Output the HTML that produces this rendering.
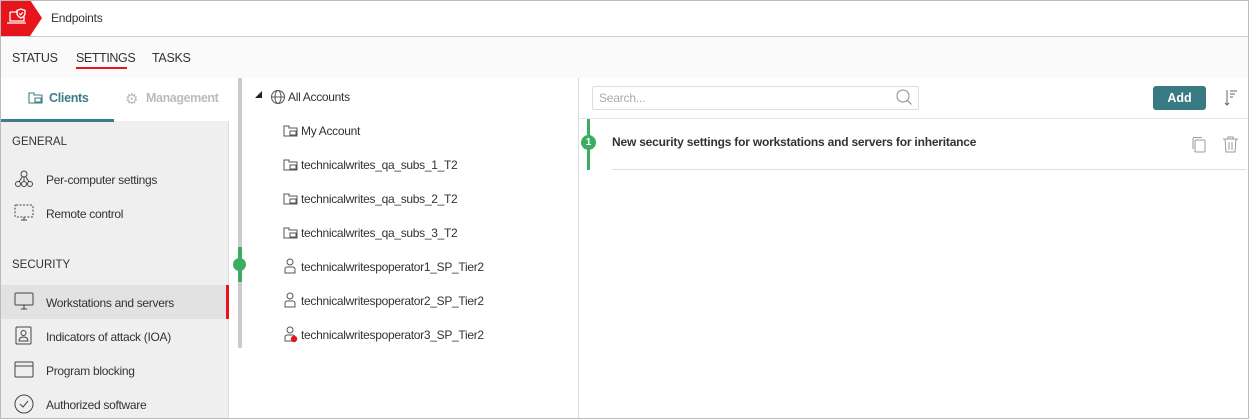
<!DOCTYPE html>
<html><head><style>
*{box-sizing:border-box;margin:0;padding:0}
body{width:1249px;height:419px;overflow:hidden;font-family:"Liberation Sans",sans-serif;color:#333;background:#fff;position:relative}
.frame{position:absolute;inset:0;border:1px solid #bbb;pointer-events:none;z-index:9}
.hdr{position:absolute;left:0;top:0;width:1249px;height:37px;border-bottom:1px solid #ccc;background:#fff}
.logo{position:absolute;left:0;top:0;width:42px;height:36px;background:#e8141b;clip-path:polygon(0 0,30px 0,42px 18px,30px 36px,0 36px)}
.abs{position:absolute;white-space:nowrap}
.tabs{position:absolute;left:0;top:37px;width:1249px;height:41px;background:#fafafa}
.left{position:absolute;left:0;top:78px;width:229px;height:341px;background:#efefef;border-right:1px solid #ddd}
.tree{position:absolute;left:230px;top:78px;width:349px;height:341px;background:#fff;border-right:1px solid #ddd}
.t{font-size:12px;letter-spacing:-0.3px;color:#333}
.sec{font-size:11.5px;color:#333}
</style></head><body>
<div class="hdr">
 <div class="logo"><svg width="30" height="36" viewBox="0 0 30 36"><g fill="none" stroke="#fff" stroke-width="1.3"><path d="M10 12h8M10 12v9h14v-5"/><path d="M7 23h19"/><path d="M21 9l4 1.5v3c0 2-2 3.5-4 4.5-2-1-4-2.5-4-4.5v-3z"/><path d="M19.3 13.5l1.3 1.2 2.3-2.3"/></g></svg></div>
 <div class="abs" style="left:51px;top:11px;font-size:12px;letter-spacing:-0.2px">Endpoints</div>
</div>
<div class="tabs">
 <div class="abs" style="left:12px;top:14px;font-size:12.5px;letter-spacing:-0.3px">STATUS</div>
 <div class="abs" style="left:76px;top:14px;font-size:12.5px;letter-spacing:-0.4px">SETTINGS</div>
 <div class="abs" style="left:76px;top:30px;width:51px;height:2px;background:#e8141b"></div>
 <div class="abs" style="left:152px;top:14px;font-size:12.5px;letter-spacing:-0.3px">TASKS</div>
</div>
<div class="left">
 <div class="abs" style="left:0;top:0;width:229px;height:43px;background:#fff"></div>
 <svg class="abs" style="left:28px;top:14px" width="15" height="12"><g fill="none" stroke="#3b7d88" stroke-width="1.1"><path d="M1 1h5v2h8v8H1z"/><path d="M7 6h6v4H7z"/></g></svg>
 <div class="abs" style="left:49px;top:13px;font-size:12.5px;font-weight:bold;letter-spacing:-0.3px;color:#3b7d88">Clients</div>
 <div class="abs" style="left:125px;top:12px;font-size:15px;color:#bbb">⚙</div>
 <div class="abs" style="left:146px;top:13px;font-size:12.5px;font-weight:bold;letter-spacing:-0.4px;color:#bbb">Management</div>
 <div class="abs" style="left:0;top:41px;width:114px;height:3px;background:#3b7d88"></div>
 <div class="abs sec" style="left:12px;top:58px">GENERAL</div>
 <svg class="abs" style="left:14px;top:92px" width="20" height="18"><g fill="none" stroke="#444" stroke-width="1"><circle cx="10" cy="4" r="3"/><circle cx="4" cy="14" r="2.5"/><circle cx="10" cy="14" r="2.5"/><circle cx="16" cy="14" r="2.5"/><path d="M10 7v4M8 7l-3 5M12 7l3 5"/></g></svg>
 <div class="abs t" style="left:46px;top:95px">Per-computer settings</div>
 <svg class="abs" style="left:14px;top:126px" width="20" height="18"><g fill="none" stroke="#444" stroke-width="1" stroke-dasharray="2 1.5"><rect x="1" y="1" width="18" height="12" rx="1"/></g><path d="M7 16h6M10 13v3" stroke="#444"/></svg>
 <div class="abs t" style="left:46px;top:129px">Remote control</div>
 <div class="abs sec" style="left:12px;top:181px">SECURITY</div>
 <div class="abs" style="left:0;top:207px;width:229px;height:34px;background:#e2e2e2"></div>
 <div class="abs" style="left:226px;top:207px;width:3px;height:34px;background:#e8141b"></div>
 <svg class="abs" style="left:14px;top:214px" width="20" height="19"><g fill="none" stroke="#444" stroke-width="1"><rect x="1" y="1" width="18" height="12" rx="1"/><path d="M7 17h6M10 13v4"/></g></svg>
 <div class="abs t" style="left:46px;top:218px">Workstations and servers</div>
 <svg class="abs" style="left:15px;top:248px" width="18" height="19"><g fill="none" stroke="#444" stroke-width="1"><rect x="1" y="1" width="15" height="17" rx="1"/><circle cx="8.5" cy="7" r="2.5"/><path d="M4 15c0-3 2-4 4.5-4s4.5 1 4.5 4z"/></g></svg>
 <div class="abs t" style="left:46px;top:252px">Indicators of attack (IOA)</div>
 <svg class="abs" style="left:14px;top:283px" width="20" height="17"><g fill="none" stroke="#444" stroke-width="1"><rect x="1" y="1" width="18" height="15" rx="1"/><path d="M1 5h18"/></g></svg>
 <div class="abs t" style="left:46px;top:286px">Program blocking</div>
 <svg class="abs" style="left:14px;top:316px" width="20" height="20"><g fill="none" stroke="#444" stroke-width="1"><circle cx="10" cy="10" r="9"/><path d="M6 10l3 3 5-6"/></g></svg>
 <div class="abs t" style="left:46px;top:320px">Authorized software</div>
</div>
<div class="tree">
 <div class="abs" style="left:8px;top:0;width:4px;height:270px;background:#ccc"></div>
 <div class="abs" style="left:8px;top:169px;width:4px;height:35px;background:#3dac63"></div>
 <div class="abs" style="left:3px;top:180px;width:13px;height:13px;border-radius:50%;background:#3dac63"></div>
 <svg class="abs" style="left:25px;top:13px" width="8" height="8"><path d="M7 0V7H0z" fill="#222"/></svg>
 <svg class="abs" style="left:40px;top:11px" width="16" height="16"><g fill="none" stroke="#555" stroke-width="1"><circle cx="8" cy="8" r="6.5"/><ellipse cx="8" cy="8" rx="3" ry="6.5"/><path d="M1.5 8h13"/></g></svg>
 <div class="abs t" style="left:58px;top:12px">All Accounts</div>
 <svg class="abs" style="left:53px;top:47px" width="16" height="12"><g fill="none" stroke="#555" stroke-width="1"><path d="M1 1h5v2h8v8H1z"/><path d="M7 6h6v4H7z"/></g></svg>
 <div class="abs t" style="left:71px;top:46px">My Account</div>
 <svg class="abs" style="left:53px;top:81px" width="16" height="12"><g fill="none" stroke="#555" stroke-width="1"><path d="M1 1h5v2h8v8H1z"/><path d="M7 6h6v4H7z"/></g></svg>
 <div class="abs t" style="left:71px;top:80px">technicalwrites_qa_subs_1_T2</div>
 <svg class="abs" style="left:53px;top:115px" width="16" height="12"><g fill="none" stroke="#555" stroke-width="1"><path d="M1 1h5v2h8v8H1z"/><path d="M7 6h6v4H7z"/></g></svg>
 <div class="abs t" style="left:71px;top:114px">technicalwrites_qa_subs_2_T2</div>
 <svg class="abs" style="left:53px;top:149px" width="16" height="12"><g fill="none" stroke="#555" stroke-width="1"><path d="M1 1h5v2h8v8H1z"/><path d="M7 6h6v4H7z"/></g></svg>
 <div class="abs t" style="left:71px;top:148px">technicalwrites_qa_subs_3_T2</div>
 <svg class="abs" style="left:54px;top:180px" width="12" height="16"><g fill="none" stroke="#555" stroke-width="1"><circle cx="6" cy="4" r="3"/><path d="M1 15v-4c0-1 1-2 2-2h6c1 0 2 1 2 2v4z"/></g></svg>
 <div class="abs t" style="left:71px;top:182px">technicalwritespoperator1_SP_Tier2</div>
 <svg class="abs" style="left:54px;top:214px" width="12" height="16"><g fill="none" stroke="#555" stroke-width="1"><circle cx="6" cy="4" r="3"/><path d="M1 15v-4c0-1 1-2 2-2h6c1 0 2 1 2 2v4z"/></g></svg>
 <div class="abs t" style="left:71px;top:216px">technicalwritespoperator2_SP_Tier2</div>
 <svg class="abs" style="left:54px;top:248px" width="14" height="17"><g fill="none" stroke="#555" stroke-width="1"><circle cx="6" cy="4" r="3"/><path d="M1 15v-4c0-1 1-2 2-2h6c1 0 2 1 2 2v4z"/></g><circle cx="10" cy="13" r="3.2" fill="#e8141b"/></svg>
 <div class="abs t" style="left:71px;top:250px">technicalwritespoperator3_SP_Tier2</div>
</div>
<div class="abs" style="left:592px;top:86px;width:327px;height:24px;border:1px solid #ddd;border-radius:2px"></div>
<div class="abs" style="left:599px;top:91px;font-size:12px;color:#aaa;letter-spacing:-0.2px">Search...</div>
<svg class="abs" style="left:895px;top:88px" width="18" height="18"><g fill="none" stroke="#888" stroke-width="1"><circle cx="8" cy="8" r="6"/><path d="M12.5 12.5l4 4"/></g></svg>
<div class="abs" style="left:1153px;top:86px;width:53px;height:24px;background:#387a84;border-radius:3px;color:#fff;font-size:12.5px;font-weight:bold;text-align:center;line-height:24px">Add</div>
<svg class="abs" style="left:1223px;top:88px" width="16" height="20"><g fill="none" stroke="#666" stroke-width="1"><path d="M4 2v15M2 15l2 2 2-2M7 3h7M7 6h5M7 9h3"/></g></svg>
<div class="abs" style="left:579px;top:118px;width:670px;height:1px;background:#e6e6e6"></div>
<div class="abs" style="left:587px;top:119px;width:3px;height:51px;background:#3dac63"></div>
<div class="abs" style="left:581px;top:135px;width:15px;height:15px;border-radius:50%;background:#3dac63;color:#fff;font-size:10px;font-weight:bold;text-align:center;line-height:15px">1</div>
<div class="abs" style="left:612px;top:135px;font-size:12px;font-weight:bold;letter-spacing:-0.2px;color:#333">New security settings for workstations and servers for inheritance</div>
<div class="abs" style="left:612px;top:169px;width:634px;height:1px;background:#e0e0e0"></div>
<svg class="abs" style="left:1191px;top:136px" width="16" height="17"><g fill="none" stroke="#999" stroke-width="1"><rect x="4" y="4" width="10" height="12" rx="1"/><path d="M2 13V3c0-1 .5-1.5 1.5-1.5H11"/></g></svg>
<svg class="abs" style="left:1222px;top:135px" width="17" height="18"><g fill="none" stroke="#999" stroke-width="1"><path d="M1 4h15M6 4V2h5v2M3 4l1 13h9l1-13M7 7v8M10 7v8"/></g></svg>
<div class="frame"></div>
</body></html>
